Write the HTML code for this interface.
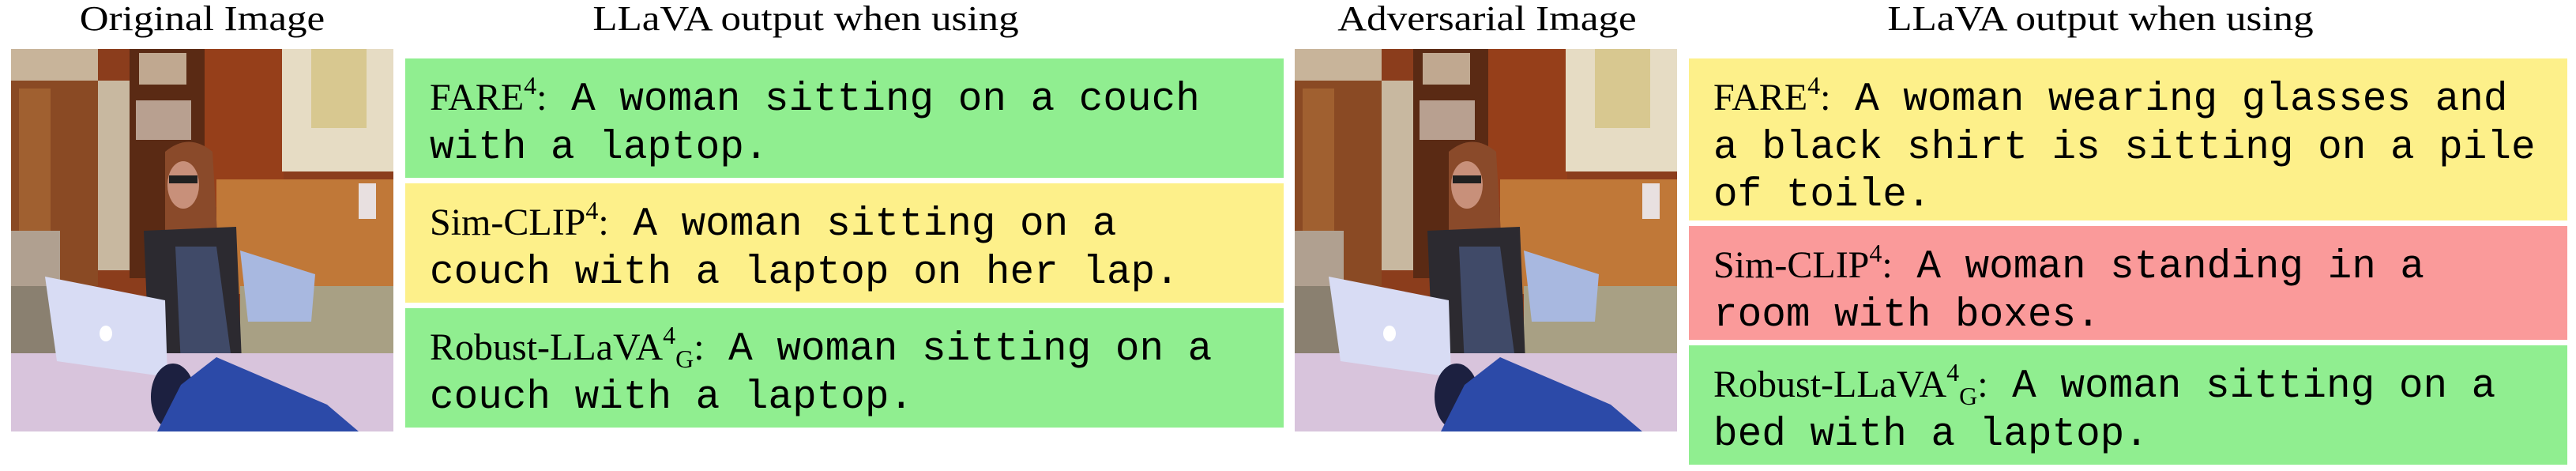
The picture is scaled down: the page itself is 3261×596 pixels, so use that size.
<!DOCTYPE html>
<html><head><meta charset="utf-8"><style>
*{margin:0;padding:0}
body{width:3261px;height:596px;background:#fff;position:relative;overflow:hidden;font-family:"Liberation Serif",serif;}
.t{position:absolute;top:-7px;font-size:44px;line-height:62px;text-align:center;color:#000;white-space:nowrap;transform:scaleX(1.16)}
.box{position:absolute;box-sizing:border-box;padding:20px 0 0 31px}
.g{background:#90ee90}.y{background:#fdf08a}.r{background:#fa9a9a}
.l{font-family:"Liberation Mono",monospace;font-size:51px;line-height:60px;white-space:pre;color:#000}
.s{font-family:"Liberation Serif",serif;font-size:48px}
sup{font-size:32px;vertical-align:0;position:relative;top:-20px}
sub{font-size:32px;vertical-align:0;position:relative;top:10px}
svg.ph{position:absolute;top:62px;width:484px;height:484px}
</style></head><body>
<svg width="0" height="0" style="position:absolute"><defs><symbol id="p" viewBox="0 0 484 484">
<rect width="484" height="484" fill="#8b3d1c"/>
<rect x="0" y="0" width="110" height="300" fill="#8a4a24"/>
<rect x="0" y="0" width="110" height="40" fill="#c8b49a"/>
<rect x="10" y="50" width="40" height="180" fill="#a06030"/>
<rect x="0" y="230" width="62" height="80" fill="#b0a090"/>
<rect x="110" y="40" width="40" height="240" fill="#c8b8a0"/>
<rect x="150" y="0" width="95" height="290" fill="#5a2a14"/>
<rect x="162" y="5" width="60" height="40" fill="#c0a890"/>
<rect x="158" y="65" width="70" height="50" fill="#b8a090"/>
<rect x="245" y="0" width="100" height="200" fill="#963f1a"/>
<rect x="343" y="0" width="141" height="155" fill="#e6dcc4"/>
<rect x="380" y="0" width="70" height="100" fill="#d8c890"/>
<rect x="260" y="165" width="224" height="145" fill="#c07838"/>
<rect x="440" y="170" width="22" height="45" fill="#e8e0e0"/>
<polygon points="290,300 484,300 484,430 290,420" fill="#a8a084"/>
<polygon points="290,255 385,285 380,345 300,345" fill="#a8b8e0"/>
<path d="M195,130 Q225,105 255,130 L262,250 L195,250 Z" fill="#8a4a2a"/>
<polygon points="168,230 285,225 292,395 175,400" fill="#2c2a30"/>
<ellipse cx="218" cy="172" rx="20" ry="30" fill="#c8907a"/>
<rect x="200" y="160" width="36" height="10" fill="#202020"/>
<polygon points="208,250 260,250 280,400 215,400" fill="#404a68"/>
<polygon points="0,300 60,300 70,390 0,395" fill="#8a8070"/>
<rect x="0" y="385" width="484" height="99" fill="#d8c4dc"/>
<polygon points="43,288 195,318 198,415 58,395" fill="#d8dcf4"/>
<ellipse cx="120" cy="360" rx="8" ry="10" fill="#fff"/>
<ellipse cx="205" cy="440" rx="28" ry="42" fill="#1c2040"/>
<polygon points="185,484 215,425 260,390 330,420 400,450 440,484" fill="#2c4aa8"/>
</symbol></defs></svg>

<div class="t" style="left:0;width:512px">Original Image</div>
<div class="t" style="left:464px;width:1112px">LLaVA output when using</div>
<svg class="ph" style="left:14px"><use href="#p"/></svg>
<div class="box g" style="left:513px;top:74px;width:1112px;height:151px"><div class="l"><span class="s">FARE<sup>4</sup>:</span> A woman sitting on a couch</div><div class="l">with a laptop.</div></div>
<div class="box y" style="left:513px;top:232px;width:1112px;height:151px"><div class="l"><span class="s">Sim-CLIP<sup>4</sup>:</span> A woman sitting on a</div><div class="l">couch with a laptop on her lap.</div></div>
<div class="box g" style="left:513px;top:390px;width:1112px;height:151px"><div class="l"><span class="s">Robust-LLaVA<sup>4</sup><sub>G</sub>:</span> A woman sitting on a</div><div class="l">couch with a laptop.</div></div>

<div class="t" style="left:1630px;width:505px">Adversarial Image</div>
<div class="t" style="left:2103px;width:1112px">LLaVA output when using</div>
<svg class="ph" style="left:1639px"><use href="#p"/></svg>
<div class="box y" style="left:2138px;top:74px;width:1112px;height:205px"><div class="l"><span class="s">FARE<sup>4</sup>:</span> A woman wearing glasses and</div><div class="l">a black shirt is sitting on a pile</div><div class="l">of toile.</div></div>
<div class="box r" style="left:2138px;top:286px;width:1112px;height:144px"><div class="l"><span class="s">Sim-CLIP<sup>4</sup>:</span> A woman standing in a</div><div class="l">room with boxes.</div></div>
<div class="box g" style="left:2138px;top:437px;width:1112px;height:151px"><div class="l"><span class="s">Robust-LLaVA<sup>4</sup><sub>G</sub>:</span> A woman sitting on a</div><div class="l">bed with a laptop.</div></div>
</body></html>
